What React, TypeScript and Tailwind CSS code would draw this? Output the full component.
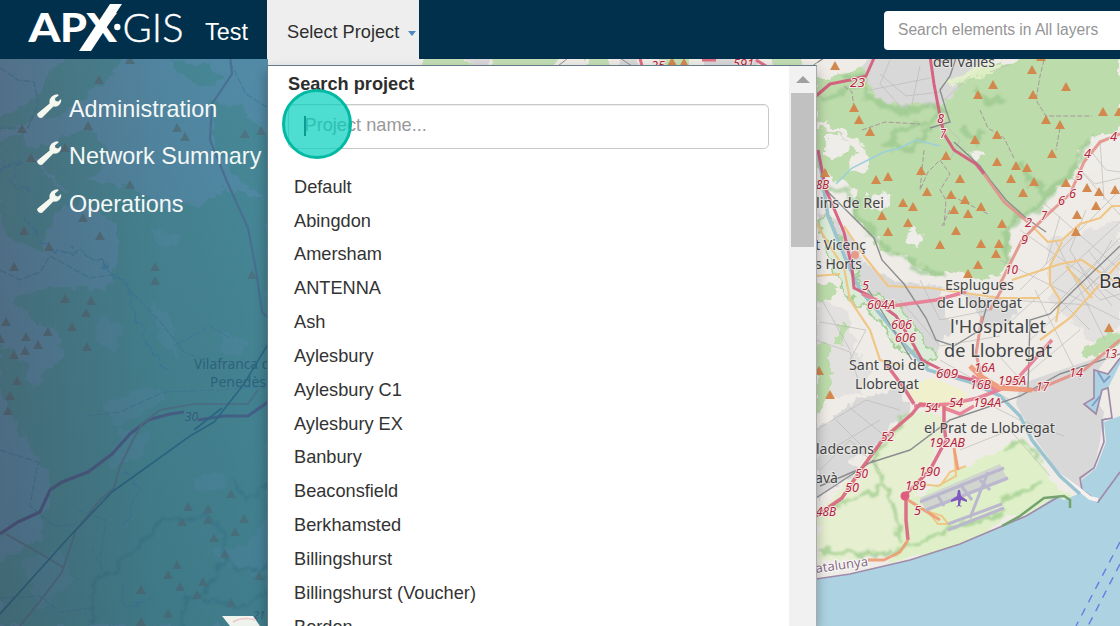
import React from "react";

const projects = [
  "Default", "Abingdon", "Amersham", "ANTENNA", "Ash", "Aylesbury", "Aylesbury C1",
  "Aylesbury EX", "Banbury", "Beaconsfield", "Berkhamsted", "Billingshurst",
  "Billingshurst (Voucher)", "Bordon",
];

const sections = ["Administration", "Network Summary", "Operations"];

const peaks: [number, number][] = [
  [835, 66], [854, 108], [859, 120], [870, 132], [978, 95], [993, 85], [1032, 70], [1033, 95], [1066, 87],
  [1046, 120], [1060, 125], [1103, 112], [1119, 112], [975, 140], [997, 135], [946, 156], [1052, 154],
  [1041, 57], [825, 173], [876, 180], [888, 177], [921, 171], [960, 179], [927, 192], [951, 195], [965, 200],
  [903, 203], [913, 207], [954, 210], [968, 214], [981, 207], [882, 216], [908, 223], [888, 232], [956, 231],
  [940, 245], [981, 244], [999, 244], [996, 254], [978, 265], [968, 274], [1002, 224], [997, 162], [1016, 166],
  [1027, 168], [1011, 179], [1034, 182], [1023, 193], [1066, 183], [1087, 188], [1099, 192], [1115, 190],
  [1096, 206], [1077, 215], [1076, 232], [1109, 328], [819, 371], [830, 395], [672, 62], [684, 63],
  [130, 60], [99, 80], [22, 129], [88, 126], [177, 128], [185, 137], [245, 134], [261, 131], [31, 158],
  [65, 148], [130, 185], [83, 218], [24, 231], [100, 236], [49, 247], [14, 267], [155, 267], [155, 281],
  [252, 275], [65, 299], [91, 301], [86, 313], [72, 327], [48, 332], [26, 337], [6, 322], [38, 345],
  [25, 351], [14, 355], [87, 347], [17, 381], [10, 396], [8, 411], [0, 339], [188, 507], [208, 509],
  [182, 522], [208, 520], [231, 494], [244, 519], [235, 532], [214, 538], [225, 554], [177, 565],
  [168, 575], [180, 587], [203, 582], [197, 595], [141, 590], [259, 576], [231, 603], [168, 614], [141, 622],
];

type Label = [string, number, number, number, number];

const places: Label[] = [
  ["del Vallès", 933, 67, 62, 14.5],
  ["lins de Rei", 816, 208, 68, 14.5],
  ["t Vicenç", 815, 250, 51, 14.5],
  ["s Horts", 815, 269, 47, 14.5],
  ["Esplugues", 945, 290, 69, 14.5],
  ["de Llobregat", 937, 308, 85, 14.5],
  ["l'Hospitalet", 950, 333, 96, 18],
  ["de Llobregat", 944, 357, 108, 18],
  ["Sant Boi de", 849, 370, 76, 14.5],
  ["Llobregat", 855, 389, 64, 14.5],
  ["el Prat de Llobregat", 924, 433, 131, 14.5],
  ["ladecans", 816, 454, 58, 14.5],
  ["avà", 815, 483, 23, 14.5],
  ["Vilafranca de", 194, 369, 84, 14],
  ["Penedès", 210, 387, 56, 14],
];

const refs: Label[] = [
  ["25", 651, 70, 14, 12.5], ["591", 733, 68, 21, 12.5], ["23", 850, 87, 15, 12.5], ["8", 937, 123, 7, 12.5],
  ["7", 940, 138, 6, 12.5], ["4", 1110, 141, 7, 12.5], ["4", 1084, 158, 7, 12.5], ["5", 1076, 180, 7, 12.5],
  ["6", 1069, 198, 7, 12.5], ["6", 1058, 205, 7, 12.5], ["7", 1041, 220, 6, 12.5], ["2", 1025, 227, 7, 12.5],
  ["9", 1021, 244, 7, 12.5], ["10", 1005, 274, 13, 12.5], ["8B", 816, 189, 13, 12.5], ["5", 862, 290, 7, 12.5],
  ["604A", 867, 309, 28, 12.5], ["606", 891, 329, 21, 12.5], ["606", 895, 342, 21, 12.5], ["609", 936, 378, 22, 12.5],
  ["16A", 974, 372, 21, 12.5], ["16B", 970, 389, 21, 12.5], ["195A", 998, 385, 28, 12.5], ["14", 1069, 377, 14, 12.5],
  ["13", 1104, 358, 13, 12.5], ["17", 1036, 391, 13, 12.5], ["54", 925, 412, 13, 12.5], ["54", 949, 407, 14, 12.5],
  ["194A", 973, 407, 28, 12.5], ["52", 881, 441, 13, 12.5], ["192AB", 929, 447, 36, 12.5], ["190", 919, 476, 21, 12.5],
  ["189", 905, 490, 21, 12.5], ["50", 855, 478, 13, 12.5], ["50", 845, 492, 14, 12.5], ["48B", 816, 516, 20, 12.5],
  ["5", 914, 515, 7, 12.5],
];

const streets = [
  "M1020 290L1120 190", "M1010 322L1120 222", "M1030 340L1120 258", "M1000 260L1120 320", "M1020 230L1120 300",
  "M1040 200L1120 270", "M1080 170L1120 215", "M1035 290L1080 380", "M1055 240L1105 340", "M1010 300L1090 305",
  "M1060 216L1046 264", "M1070 270L1100 300L1120 294", "M1050 310L1100 260L1112 240", "M1090 150L1106 170L1120 172",
  "M1075 165L1095 184L1120 178", "M1100 140L1104 200", "M1086 210L1070 250L1094 290", "M1078 280L1120 238",
  "M1086 290L1120 254", "M1074 258L1112 306", "M1088 250L1120 290", "M1060 300L1090 330",
  "M816 430L866 400L900 410", "M830 450L880 420", "M820 470L850 440L880 470", "M836 420L872 456", "M850 408L890 440",
  "M900 300L940 346L1000 336", "M920 280L940 320L990 310", "M940 360L1010 400", "M960 450L1010 430L1050 476",
  "M980 400L1020 420L1064 436", "M1020 380L1080 330", "M990 346L1030 390", "M816 340L850 352L858 380",
  "M820 322L866 330L850 360", "M822 300L850 350", "M880 74L906 96L940 92", "M890 60L880 84L900 106",
  "M920 66L912 104", "M870 90L930 78", "M940 120L960 140L950 160", "M990 72L1010 64", "M944 100L970 76",
];

function Streets() {
  return (
    <g fill="none" stroke="#b9b7b5" strokeWidth="0.8" opacity=".8">
      {streets.map((d) => <path key={d} d={d} />)}
    </g>
  );
}

function EastMap() {
  return (
    <g>
      <rect x="268" y="50" width="852" height="580" fill="#efece8" />
      <g filter="url(#rough)">
        <path fill="#d9d8d8" d="M862 56H990L985 82L960 92L950 104L925 110L895 108L868 92ZM930 118L960 116L975 128L958 146L940 134ZM826 130L848 136L850 150L832 160L820 150ZM816 210L840 222L864 262L900 284L940 288L950 330L930 360L900 340L866 296L830 250ZM860 396L900 390L908 412L870 452L816 470V430ZM816 470L850 458L860 470L816 500ZM960 290L1008 300L1020 316L990 330Z" />
        <path fill="#e3e1e0" d="M816 300L846 310L856 350L872 372L860 392L816 400ZM1050 240L1120 220V330L1090 340L1050 300Z" />
        <path fill="#bddcab" d="M816 80L842 74L864 66L874 96L900 108L934 104L950 100L960 88L985 84L1010 62L1026 56H1120V134L1096 136L1080 152L1074 176L1056 188L1040 210L1022 216L1010 232L1008 262L1000 276L975 280L958 270L940 276L922 272L905 256L884 250L868 232L852 214L858 190L838 180L816 170V128L840 134L856 152L848 170L870 172L866 148L848 132L826 124L816 122Z" />
        <path fill="#bddcab" d="M816 280L838 286L830 300L816 304ZM816 340L828 346L832 370L826 408L816 412ZM836 322L848 322L844 344L836 342ZM1080 352L1110 330L1120 334V346L1086 360ZM958 84L1000 60L1010 76L984 96L960 94Z" />
      </g>
      <path fill="#d9d8d8" d="M1020 384L1084 362L1110 354L1094 376V398L1104 412L1100 442L1094 468L1078 484L1060 474L1036 440L1016 404Z" />
      <g fill="none" stroke="#93c488" strokeWidth="6" opacity=".6" filter="url(#soft)">
        <path d="M842 78L862 74L868 98L900 112L930 104L945 112L922 126L898 128L886 146L912 148L930 130" />
        <path d="M1094 136L1082 150L1072 176L1056 184L1038 208L1020 216L1006 232L1006 262" />
        <path d="M1018 160L1030 178L1044 194M975 88L990 104L1002 96M868 230L890 252L904 256L920 270L944 274M820 190L850 190L856 214L872 232M960 130L982 136L976 146M820 100L840 92L856 86" />
      </g>
      <g fill="#efede9" filter="url(#rough)">
        <path d="M824 134L846 136L850 146L838 160L824 156Z" /><path d="M970 152L982 150L986 156L976 160Z" />
        <path d="M868 192L888 194L894 206L870 210Z" /><path d="M1090 142L1120 132V186L1086 168Z" />
        <path d="M912 228L924 236L918 250L906 240Z" />
      </g>
      <path fill="#e6f4c8" opacity=".8" d="M944 84L985 60L1004 66L960 86Z" filter="url(#rough)" />
      <path fill="none" stroke="#9bcfd9" strokeWidth="1.5" d="M836 184L852 168L884 152L900 148L916 140L940 146" />
      <path fill="#f0f0cd" d="M908 384L934 378L966 392L968 406L948 412L922 406L910 396Z" />
      <g filter="url(#rough)">
        <path fill="#e6efd0" d="M820 512L868 456L914 410L944 416L938 450L910 500L900 550L816 566Z" />
        <path fill="#dff0c8" d="M1004 446L1026 440L1052 480L1070 494L1040 508L1004 520L960 548L900 560L890 566L908 500L940 484Z" />
        <path fill="#dcebd8" stroke="#a7cf98" strokeWidth="2" d="M816 218L830 216L842 250L862 286L904 312L938 356L930 364L896 344L870 310L844 296Z" />
      </g>
      <path filter="url(#soft)" fill="none" stroke="#a2cf90" opacity=".8" strokeWidth="4" d="M908 412L872 460L886 486L902 542M832 508L884 486M820 552L892 554L960 526L1004 512M1002 448L1026 440L1042 462M1000 502L1040 484" />
      <Streets />
      <path fill="#add3e2" d="M1120 358L1108 374L1094 370V398L1084 404L1096 414L1102 390L1108 388L1112 418L1102 420L1104 442L1094 468L1080 478L1082 490L1098 502L1110 492L1120 478V630H816V579L850 574L910 560L960 544L1026 516L1056 496L1064 500L1078 494L1058 474L1094 468L1104 442V418L1112 418L1108 388L1120 364Z" />
      <path fill="#add3e2" d="M1096 502L1082 492V480L1096 468L1106 442L1104 422L1120 416V520Z" />
      <path fill="#d9d8d8" d="M1040 440L1100 436L1094 466L1080 480L1082 490L1076 490L1056 472Z" />
      <path fill="none" stroke="#a08ba9" strokeWidth="1.7" d="M816 579L850 574L910 560L960 544L1026 516L1060 496M1120 358L1108 374L1094 370V398L1084 404L1096 414L1102 390L1108 388L1112 418L1102 420L1104 442L1094 468L1080 478L1082 490L1098 502L1120 472" />
      <path fill="none" stroke="#74a36e" strokeWidth="2.5" d="M1002 526L1020 516L1044 498L1064 496L1070 500V508" />
      <path fill="none" stroke="#f5f2ef" strokeWidth="4" d="M1058 474L1080 490L1090 498L1098 500" />
      <path fill="none" stroke="#9bc4d0" strokeWidth="3.5" d="M818 150L828 216L846 260L860 290L880 314L906 346L928 370L970 382L1000 396L1020 416L1032 440L1060 476L1080 494" />

      <g fill="none" stroke="#f0c685" strokeWidth="2.2">
        <path d="M816 222L826 240L844 268L850 300L870 330L880 360L904 366M816 276L840 274M844 226L864 256L888 286L930 288L1000 298L1040 298M1012 280L1060 264L1082 260L1108 278L1120 282M1032 226L1048 242L1062 240L1080 224L1100 218L1112 206H1120M1062 242L1050 266V284L1060 300L1056 322M1120 262L1070 318L1040 340M1066 266L1092 298" />
        <path d="M954 450L956 476L938 486L920 484M918 508L942 516L948 524L938 524L930 514M966 466L950 472L940 486" strokeWidth="2" />
      </g>
      <g fill="none" stroke="#8b8d8e" strokeWidth="1.4">
        <path d="M818 62L824 58M940 62L956 58L950 76L940 90L946 110L950 122L930 128M954 142L980 166L990 180L1006 200L1026 218L1046 232" />
        <path d="M826 190L846 210L874 238L882 260L904 284L926 318L936 340L954 346L980 330L988 302M866 286L896 334L912 360M866 464L910 450L950 420L1020 396L1060 374L1120 354M1028 390L1030 320L1050 314L1074 290L1120 246M816 498L874 460M820 486L862 468" />
      </g>
      <g fill="none" stroke="#a7979b" strokeWidth="1" strokeDasharray="5 2">
        <path d="M844 86L852 92L854 108M862 130L885 122L920 124M924 150L920 190L928 172L940 160L950 174L940 190L946 200L944 226M1044 60L1040 76L1036 100L1046 116L1092 116M1060 128L1056 150M980 110L988 128L1004 138L1014 158M952 196L988 214M950 210L942 226" />
      </g>
      <g fill="none" strokeLinejoin="round" opacity=".9">
        <path stroke="#d5587b" strokeWidth="3" d="M816 96L830 84L850 80L866 76L874 58M930 56L934 84L940 116L944 134L954 150L976 164L984 174M818 150L826 190L844 232L852 268L854 288L866 294L896 316L912 342L922 360L950 374L988 384" />
        <path stroke="#e29389" strokeWidth="3" d="M984 174L1004 202L1028 222M1000 284L1022 240L1046 216L1070 194L1084 162L1100 142L1120 134M990 310L1006 282M982 316L976 354L984 386L1036 390L1084 370L1120 340" />
        <path stroke="#e97a92" strokeWidth="3.5" d="M862 294L892 306L936 300L966 292M972 376L996 390L1016 380L1052 340M914 406L950 404L978 398L1004 388M944 408L960 414L974 406" />
        <path stroke="#da657f" strokeWidth="3.5" d="M816 516L842 498L862 468L884 438L912 414L920 404L940 406M886 364L904 388L914 404M944 406V426L946 440L930 470L906 494V520L908 540" />
        <path stroke="#ef9673" strokeWidth="5" d="M970 366L980 376L1000 388L1032 390" />
        <path stroke="#ee9c72" strokeWidth="3" d="M908 540L900 552L884 560L868 560M908 500L940 520M954 448L958 470" />
      </g>
      <circle cx="905" cy="496" r="4.5" fill="#df5d7e" /><circle cx="855" cy="255" r="4" fill="#e79b87" />
      <path fill="#c2bfd1" opacity=".55" d="M920 498L1000 464L1008 480L926 512Z" />
      <g fill="none" stroke="#bab7cf" strokeWidth="3">
        <path d="M920 502L1004 468M926 510L1008 478M948 530L1004 508M948 524L1002 504M970 518L988 472M938 496L944 506M960 484L972 500M980 480L990 490" />
      </g>
      <path fill="#8058c0" d="M958 490L960 490L961 496L967 500V502L961 500L960 505L962 507L959 506L956 507L958 505V500L951 502V500L957 496Z" />
      <g fill="none" stroke="#657de0" strokeWidth="1.4" strokeDasharray="8 7">
        <path d="M1120 542L1076 626M1120 564L1088 626" />
      </g>
      <path stroke="#829cc9" strokeWidth="2" fill="none" d="M1098 372L1104 382L1110 376M1092 406L1100 396" />
      <text x="816" y="573" fontFamily="Noto Sans" fontSize="13" fill="#856b83" stroke="#fff" strokeWidth="1.5" paintOrder="stroke" transform="rotate(-8 816 573)" textLength="53" lengthAdjust="spacingAndGlyphs">atalunya</text>
    </g>
  );
}

function WestMap() {
  return (
    <g>
      <rect y="50" width="268" height="576" fill="#dfe2df" />
      <g fill="#b0d8a1" filter="url(#rough)">
        <path d="M64 56H122L108 80L82 98L60 116L30 120L0 132V120L32 100ZM60 138L84 128L110 150L100 174L66 188L46 170L30 150ZM0 142L22 134L38 166L62 190L80 180L132 188L164 210L200 204L224 188L268 200V626H0V560L40 540L50 480L20 430L0 390V344L26 362L28 390L50 366L64 360L60 334L30 318L14 300L30 292L64 286L104 290L116 270V224L84 200L56 214L40 250L12 240L0 220Z" />
        <path d="M166 60L206 64L226 80L200 86L178 74ZM210 100L244 108L268 140V200L240 180L216 150Z" />
      </g>
      <g fill="#dfe5df" filter="url(#rough)" opacity=".6">
        <path d="M40 345L54 326L62 356L48 370L34 390L22 380ZM100 404L150 386L166 400L120 426ZM210 552L250 546L268 510V574L240 572ZM190 480L222 472L230 486L200 494ZM120 430L150 434L140 460L108 470ZM8 452L30 468L26 490L4 480ZM150 300L170 316L178 360L160 340ZM20 560L60 552L76 580L40 610ZM100 316L124 330L112 352L96 340ZM150 230L180 236L176 250L158 246ZM220 330L250 340L240 356L222 350Z" />
      </g>
      <g fill="none" stroke="#8fb5c5" strokeWidth="1.6" filter="url(#rough)">
        <path d="M24 218L40 240L54 252L80 252L106 268L126 284L136 316L148 346L166 370M0 170L20 160L12 184L30 190M122 584L126 606L154 600M126 470L138 490L124 524" />
      </g>
      <g fill="none" stroke="#86ad84" strokeWidth="3" filter="url(#soft)">
        <path d="M92 626L94 580L114 570L134 550L150 536L164 516L184 520L208 516L224 532L226 558L204 592L184 600L184 626M224 560L246 572L268 566M230 480L248 500L268 484M204 600L240 606L268 592" />
      </g>
      <g fill="none" stroke="#9aaeb3" strokeWidth="1.2">
        <path d="M0 68L18 80L34 82L38 104L28 128L0 128M0 270L20 280L40 272L50 256L90 278L116 274L126 286L162 324L184 352L200 358M86 416L120 412L164 392L220 390L268 386M0 450L38 462L30 506L54 526L76 524M92 548L102 570L100 560L106 520L78 510M0 598L40 596L60 612L90 608M230 62L246 94L268 108M178 344L210 326L230 338" strokeDasharray="7 2" />
      </g>
      <path fill="none" stroke="#ba7b91" strokeWidth="2.2" d="M230 56L232 74L212 104L210 140L228 184L248 228L256 270L262 312L268 318" />
      <path fill="none" stroke="#b83a70" strokeWidth="3.2" d="M0 534L18 522L40 512L50 490L62 482L88 472L112 454L130 434L148 420L170 414L184 412M198 420L224 416L248 416L268 402" />
      <path fill="none" stroke="#d18a6c" strokeWidth="2" d="M20 626L44 596L62 572L76 530L100 500L114 488L120 466L134 438L142 424L160 410L194 404L248 404L258 390M6 534L48 558L64 568" />
      <path fill="none" stroke="#3b5f70" strokeWidth="1.7" d="M0 614L70 536L112 492L190 436L214 422L244 384L268 344M194 430L222 408" />
      <text x="185" y="421" fontFamily="Noto Sans" fontSize="12" fontStyle="italic" fill="#722f47">30</text>
      <text x="253" y="619" fontFamily="Noto Sans" fontSize="11" fontStyle="italic" fill="#722f47">21</text>
    </g>
  );
}

function MapLayer() {
  return (
    <svg className="absolute inset-0" width="1120" height="626" viewBox="0 0 1120 626" aria-label="Map">
      <defs>
        <filter id="rough" x="-5%" y="-5%" width="110%" height="110%" colorInterpolationFilters="sRGB">
          <feTurbulence type="fractalNoise" baseFrequency="0.09" numOctaves="3" seed="4" />
          <feDisplacementMap in="SourceGraphic" scale="14" xChannelSelector="R" yChannelSelector="G" />
          <feGaussianBlur stdDeviation="0.5" />
        </filter>
        <filter id="soft" x="-5%" y="-5%" width="110%" height="110%" colorInterpolationFilters="sRGB">
          <feTurbulence type="fractalNoise" baseFrequency="0.09" numOctaves="3" seed="7" />
          <feDisplacementMap in="SourceGraphic" scale="14" xChannelSelector="R" yChannelSelector="G" />
          <feGaussianBlur stdDeviation="1.3" />
        </filter>
      </defs>
      <EastMap />
      <WestMap />
      <path fill="#c3deb4" d="M421 55H460L476 70H421ZM488 55H560L548 70H494ZM590 55H612V70H580ZM655 55H690V70H662ZM768 55H800L806 70H776Z" filter="url(#rough)" />
      <path fill="#d9d8d8" d="M462 55H486L490 70H474ZM620 55H640L636 70H616ZM700 55H760V70H712Z" filter="url(#rough)" />
      <path fill="none" stroke="#8b8d8e" d="M558 66L568 58M620 58L632 66M812 66L824 58" />
      <path fill="none" stroke="#df6c82" strokeWidth="3" d="M640 58L642 66M702 60H716M756 60L766 66" />
      <g fill="#d3894e">
        {peaks.map(([x, y], i) => <path key={i} d={`M${x} ${y - 5}l5 9h-10z`} />)}
      </g>
      <g fontFamily="Noto Sans, sans-serif" paintOrder="stroke" strokeLinejoin="round">
        {refs.map(([t, x, y, w, s], i) => (
          <text key={i} x={x} y={y} fontSize={s} textLength={w} lengthAdjust="spacingAndGlyphs" fontStyle="italic" fill="#b0283d" stroke="#f7e9e5" strokeWidth="2">{t}</text>
        ))}
        {places.map(([t, x, y, w, s], i) => (
          <text key={i} x={x} y={y} fontSize={s} textLength={w} lengthAdjust="spacingAndGlyphs" fill="#454545" stroke="#eeeeeb" strokeOpacity={x < 268 ? 0 : 0.7} strokeWidth="2">{t}</text>
        ))}
        <text x="1099" y="288" fontSize="19" fill="#393939" stroke="#eee" strokeWidth="2">Barcelona</text>
      </g>
    </svg>
  );
}

function Logo() {
  return (
    <svg width="156" height="56" viewBox="28 0 156 56" fill="#fff" aria-label="APX GIS">
      <g fontFamily="Lato, sans-serif">
        <text x="28.5" y="42" fontSize="40" fontWeight="900" textLength="32" lengthAdjust="spacingAndGlyphs">A</text>
        <text x="60" y="42" fontSize="40" fontWeight="900" textLength="27" lengthAdjust="spacingAndGlyphs">P</text>
        <text x="86" y="42" fontSize="40" fontWeight="900" textLength="31" lengthAdjust="spacingAndGlyphs">X</text>
        <text x="122.5" y="42" fontSize="40" fontWeight="300" textLength="61" lengthAdjust="spacingAndGlyphs" stroke="#fff" strokeWidth=".4">GIS</text>
      </g>
      <path d="M110 4H122L91 51H79Z" />
      <circle cx="117.3" cy="27" r="3.2" />
    </svg>
  );
}

function Wrench() {
  return (
    <svg width="25" height="25" viewBox="0 0 25 25" fill="#f5f8ee">
      <path d="M.5 19.4L12.6 9.4C11.6 4.2 15.4.7 20.5.2L21.8 1.2L17.9 4.6L18.6 7L21.2 7.4L24.1 4.9C24.8 9.9 21 13.6 16.4 12.6L5.4 23.6C3.2 25.4-1.2 21.6.5 19.4Z" />
    </svg>
  );
}

export default function App() {
  return (
    <div className="relative h-[626px] w-[1120px] overflow-hidden font-['Liberation_Sans',Arial,sans-serif]">
      <MapLayer />

      <header className="relative flex h-[59px] items-start bg-[#01304c]">
        <div className="flex h-full w-[267px] shrink-0 pl-7">
          <Logo />
          <span className="pl-[21px] pt-[19px] text-[23.4px] leading-[27px] text-white">Test</span>
        </div>
        <button className="flex h-[65px] w-[152px] shrink-0 items-center bg-[#eeeeee] pl-5 pt-px text-left text-[18.2px] text-[#2e2e2e]">
          <span className="w-[121px] whitespace-nowrap">Select Project</span>
          <span className="h-0 w-0 border-x-[4.5px] border-t-[5px] border-x-transparent border-t-[#4c88bd]" />
        </button>
        <div className="ml-auto mt-[11px] flex h-[39px] w-[236px] items-center whitespace-nowrap rounded-l-[4px] bg-white pb-px pl-[14px] text-[15.6px] text-[#959595]">
          Search elements in All layers
        </div>
      </header>

      <aside className="relative h-[567px] w-[268px] bg-[linear-gradient(to_bottom,rgba(30,70,80,0),rgba(30,75,85,0.18)),linear-gradient(to_right,rgba(42,80,112,0.78),rgba(38,105,140,0.77)_60%,rgba(38,112,150,0.76))]">
        <nav className="flex flex-col pl-[37px] pt-[27px]">
          {sections.map((s) => (
            <a key={s} className="flex h-[47.5px] items-center gap-[7px] pb-[1px] text-[23.4px] leading-[47px] text-[#f4f8f7]">
              <span className="pb-[6px]"><Wrench /></span>
              <span className="whitespace-nowrap">{s}</span>
            </a>
          ))}
        </nav>
        <svg className="absolute bottom-0 left-[221px]" width="47" height="10" viewBox="0 0 47 10">
          <path d="M1 0H32L39 10H9Z" fill="#eef3ee" />
          <path d="M12 6Q22 0 35 4" fill="none" stroke="#edc7c6" strokeWidth="1.5" />
        </svg>
      </aside>

      <div className="absolute left-[267px] top-[65px] flex h-[561px] w-[550px] border border-b-0 border-[#647b89] border-r-[#aaa] bg-white shadow-[0_6px_12px_rgba(0,0,0,0.3)]">
        <div className="flex-1 overflow-hidden">
          <div className="pl-5 pt-[7px] text-[18.2px] font-bold leading-[23px] text-[#2e2e2e]">Search project</div>
          <div className="ml-5 mt-[8px] flex h-[45px] w-[481px] items-center rounded-[5px] border border-[#c9c9c9] pb-px pl-[15px] text-[18.2px] text-[#999] shadow-[inset_0_1px_1px_rgba(0,0,0,0.075)]">
            <span className="-mr-px h-5 w-[1.5px] bg-[#222]" />
            Project name...
          </div>
          <ul className="pt-[20.7px]">
            {projects.map((p) => (
              <li key={p} className="h-[33.85px] pl-[26px] text-[18.2px] leading-[34px] text-[#333]">{p}</li>
            ))}
          </ul>
        </div>
        <div className="flex w-[27px] flex-col items-center bg-[#f1f1f1]">
          <div className="flex h-[27px] items-center">
            <span className="h-0 w-0 border-x-[7px] border-b-[7px] border-x-transparent border-b-[#a0a0a0]" />
          </div>
          <div className="h-[154px] w-[23px] bg-[#c1c1c1]" />
        </div>
      </div>

      <div className="absolute left-[282px] top-[89px] h-[70px] w-[70px] rounded-full border-[3px] border-[#02b9a4] bg-[#02cfbd]/70" />
    </div>
  );
}
